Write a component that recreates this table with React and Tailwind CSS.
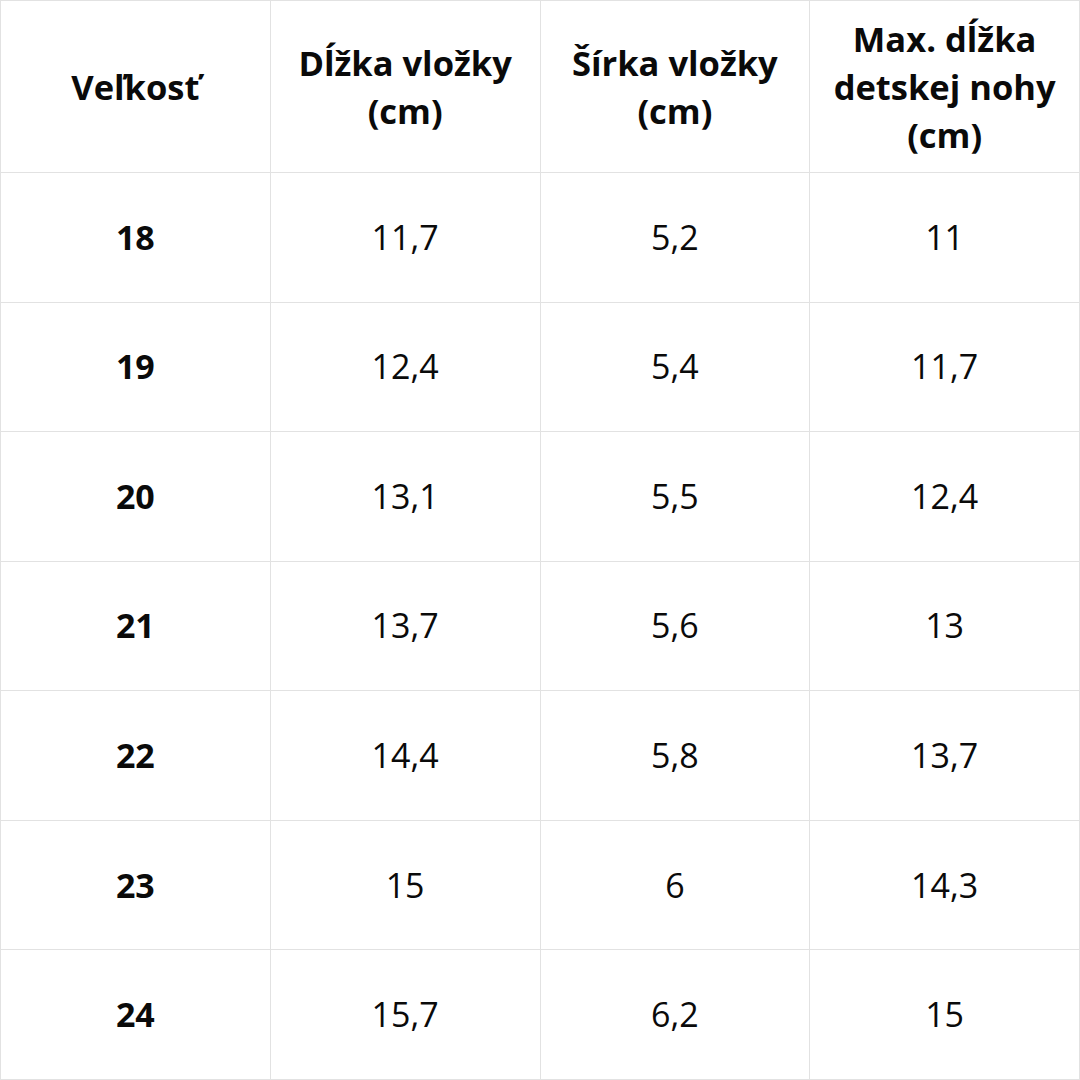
export default function App() {
  const headers = [
    "Veľkosť",
    "Dĺžka vložky (cm)",
    "Šírka vložky (cm)",
    "Max. dĺžka detskej nohy (cm)",
  ];
  const rows = [
    ["18", "11,7", "5,2", "11"],
    ["19", "12,4", "5,4", "11,7"],
    ["20", "13,1", "5,5", "12,4"],
    ["21", "13,7", "5,6", "13"],
    ["22", "14,4", "5,8", "13,7"],
    ["23", "15", "6", "14,3"],
    ["24", "15,7", "6,2", "15"],
  ];
  return (
    <div
      className="w-[1080px] h-[1080px] bg-white text-[#0a0a0a] grid grid-cols-4 grid-rows-[172px_repeat(7,1fr)] border-t border-l border-[#e2e2e2]"
      style={{ fontFamily: '"Open Sans", "Noto Sans", sans-serif' }}
    >
      {headers.map((h, i) => (
        <div
          key={"h" + i}
          className={
            "flex items-center justify-center text-center border-b border-r border-[#e2e2e2] font-bold text-[34.5px] leading-[48px] " +
            (i === 3 ? "px-4" : i === 0 ? "px-3" : "px-5")
          }
        >
          {h}
        </div>
      ))}
      {rows.map((r, ri) =>
        r.map((c, ci) => (
          <div
            key={ri + "-" + ci}
            className={
              "flex items-center justify-center border-b border-r border-[#e2e2e2] text-[34px] " +
              (ci === 0 ? "font-bold" : "font-normal")
            }
          >
            {c}
          </div>
        ))
      )}
    </div>
  );
}
